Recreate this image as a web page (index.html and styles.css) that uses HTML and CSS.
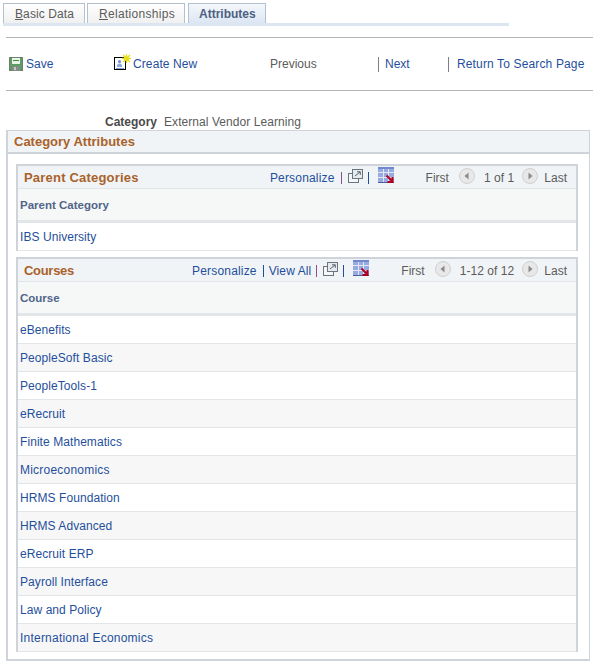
FILE: index.html
```html
<!DOCTYPE html>
<html lang="en">
<head>
    <meta charset="UTF-8">
    <meta name="viewport" content="width=device-width, initial-scale=1.0">
    <title>Category Attributes</title>
    <link rel="stylesheet" href="styles.css">
</head>
<body>
    <div class="tabs">
        <a class="tab tab-basic"><u>B</u>asic Data</a>
        <a class="tab tab-rel"><u>R</u>elationships</a>
        <a class="tab tab-active">Attributes</a>
    </div>

    <div class="toolbar">
        <a class="tool tool-save">
            <svg width="14" height="14" viewBox="0 0 14 14"><rect x="0.5" y="0.5" width="13" height="13" fill="#5c9c62" stroke="#6e8070"/><rect x="3" y="1" width="8" height="6" fill="#eaf4e6"/><rect x="4" y="3" width="6" height="1" fill="#3c8c3c"/><rect x="3" y="9" width="8" height="5" fill="#858b85"/><rect x="5" y="10" width="2" height="3" fill="#c4c8c4"/></svg>
            <span>Save</span>
        </a>
        <a class="tool tool-new">
            <svg width="17" height="17" viewBox="0 0 17 17"><rect x="0.5" y="3.5" width="11" height="12" fill="#fff" stroke="#000"/><circle cx="5.5" cy="7.5" r="1.6" fill="#6f8fd0"/><path d="M3 13v-2l1.500-1.500h2L8 11v2z" fill="#8fa8de"/><rect x="2" y="14" width="8" height="1" fill="#7f9fd8"/><rect x="10" y="2" width="5" height="5" fill="#f2ee50"/><path d="M12.500 0v9M8 4.500h9M9 1l7 7M16 1l-7 7" stroke="#e6de20" stroke-width="1.300"/></svg>
            <span>Create New</span>
        </a>
        <span class="tool tool-prev">Previous</span>
        <a class="tool tool-next">Next</a>
        <a class="tool tool-return">Return To Search Page</a>
    </div>

    <div class="field-row">
        <span class="field-label">Category</span>
        <span class="field-value">External Vendor Learning</span>
    </div>

    <div class="section">
        <h2 class="section-title">Category Attributes</h2>

        <div class="grid grid-parents">
            <div class="grid-head">
                <h3 class="grid-title">Parent Categories</h3>
                <div class="grid-tools">
                    <a class="link-personalize">Personalize</a>
                    <i class="sep sep-first sep-purple"></i>
                    <svg class="icon-zoom" width="15" height="14" viewBox="0 0 15 14"><rect x="0.500" y="4.500" width="10" height="9" fill="#f4f6f8" stroke="#6b7580"/><rect x="4.500" y="0.500" width="10" height="9" fill="#e6eaee" stroke="#6b7580"/><path d="M7 7l5-4M9 2.800h3.300v3" fill="none" stroke="#55616d"/></svg>
                    <i class="sep"></i>
                    <svg class="icon-grid" width="16" height="16" viewBox="0 0 16 16"><rect x="0" y="0" width="16" height="16" fill="#97abe0"/><path d="M0 5.500h16M0 10.500h16M5.500 0v16M10.500 0v16" stroke="#e2e7f4"/><rect x="0" y="0" width="16" height="2" fill="#7189cc"/><rect x="0" y="15" width="16" height="1" fill="#4a5f9c"/><path d="M8.500 8.500l5 5M14.500 10v5h-5" fill="none" stroke="#b00020" stroke-width="2"/></svg>
                </div>
                <div class="pager">
                    <span>First</span>
                    <svg class="arrow arrow-prev" width="16" height="16" viewBox="0 0 16 16"><circle cx="8" cy="8" r="7.500" fill="#e8e8e8" stroke="#cfcfcf"/><path d="M9.500 4.500v7L5.500 8z" fill="#8a8a8a"/></svg>
                    <span class="pager-count">1 of 1</span>
                    <svg class="arrow arrow-next" width="16" height="16" viewBox="0 0 16 16"><circle cx="8" cy="8" r="7.500" fill="#e8e8e8" stroke="#cfcfcf"/><path d="M6.500 4.500v7L10.500 8z" fill="#8a8a8a"/></svg>
                    <span>Last</span>
                </div>
            </div>
            <div class="col-head">Parent Category</div>
            <div class="row"><a>IBS University</a></div>
        </div>

        <div class="grid grid-courses">
            <div class="grid-head">
                <h3 class="grid-title">Courses</h3>
                <div class="grid-tools">
                    <a class="link-personalize">Personalize</a>
                    <i class="sep sep-first"></i>
                    <a class="link-viewall">View All</a>
                    <i class="sep sep-purple"></i>
                    <svg class="icon-zoom" width="15" height="14" viewBox="0 0 15 14"><rect x="0.500" y="4.500" width="10" height="9" fill="#f4f6f8" stroke="#6b7580"/><rect x="4.500" y="0.500" width="10" height="9" fill="#e6eaee" stroke="#6b7580"/><path d="M7 7l5-4M9 2.800h3.300v3" fill="none" stroke="#55616d"/></svg>
                    <i class="sep"></i>
                    <svg class="icon-grid" width="16" height="16" viewBox="0 0 16 16"><rect x="0" y="0" width="16" height="16" fill="#97abe0"/><path d="M0 5.500h16M0 10.500h16M5.500 0v16M10.500 0v16" stroke="#e2e7f4"/><rect x="0" y="0" width="16" height="2" fill="#7189cc"/><rect x="0" y="15" width="16" height="1" fill="#4a5f9c"/><path d="M8.500 8.500l5 5M14.500 10v5h-5" fill="none" stroke="#b00020" stroke-width="2"/></svg>
                </div>
                <div class="pager">
                    <span>First</span>
                    <svg class="arrow arrow-prev" width="16" height="16" viewBox="0 0 16 16"><circle cx="8" cy="8" r="7.500" fill="#e8e8e8" stroke="#cfcfcf"/><path d="M9.500 4.500v7L5.500 8z" fill="#8a8a8a"/></svg>
                    <span class="pager-count">1-12 of 12</span>
                    <svg class="arrow arrow-next" width="16" height="16" viewBox="0 0 16 16"><circle cx="8" cy="8" r="7.500" fill="#e8e8e8" stroke="#cfcfcf"/><path d="M6.500 4.500v7L10.500 8z" fill="#8a8a8a"/></svg>
                    <span>Last</span>
                </div>
            </div>
            <div class="col-head">Course</div>
            <div class="row"><a>eBenefits</a></div>
            <div class="row row-alt"><a>PeopleSoft Basic</a></div>
            <div class="row"><a>PeopleTools-1</a></div>
            <div class="row row-alt"><a>eRecruit</a></div>
            <div class="row"><a>Finite Mathematics</a></div>
            <div class="row row-alt"><a class="wide">Microeconomics</a></div>
            <div class="row"><a>HRMS Foundation</a></div>
            <div class="row row-alt"><a>HRMS Advanced</a></div>
            <div class="row"><a>eRecruit ERP</a></div>
            <div class="row row-alt"><a>Payroll Interface</a></div>
            <div class="row"><a>Law and Policy</a></div>
            <div class="row row-alt"><a class="wide">International Economics</a></div>
        </div>
    </div>
</body>
</html>
```

FILE: styles.css
```css
body {
    margin: 0;
    padding: 0;
    background: #fff;
    font-family: "Liberation Sans", Arial, sans-serif;
    font-size: 12px;
    color: #5b5b5b;
    height: 664px;
    overflow: hidden;
}

a {
    color: #1f4f9c;
    text-decoration: none;
}

/* Tabs */
.tabs {
    display: flex;
    gap: 2px;
    width: 506px;
    height: 20px;
    margin-left: 3px;
    padding-top: 3px;
    border-bottom: 3px solid #dce6f3;
}

.tab {
    height: 20px;
    box-sizing: border-box;
    padding: 3px 0 0 11px;
    border: 1px solid #b4bfcf;
    border-bottom: none;
    background: linear-gradient(#fff, #f0f0f0);
    color: #5b5b5b;
}

.tab-basic {
    width: 82px;
    letter-spacing: 0.1px;
}

.tab-rel {
    width: 98px;
    letter-spacing: 0.3px;
}

.tab-active {
    width: 78px;
    margin-left: 1px;
    padding-left: 10px;
    font-weight: bold;
    color: #4d6082;
    background: linear-gradient(#f4f7fb, #dce6f3);
}

/* Toolbar */
.toolbar {
    display: flex;
    align-items: center;
    height: 52px;
    margin: 11px 0 0 6px;
    border-top: 1px solid #b5b5b5;
    border-bottom: 1px solid #b5b5b5;
}

.tool {
    display: flex;
    align-items: center;
    box-sizing: border-box;
}

.tool-save {
    width: 108px;
    padding-left: 3px;
    gap: 3px;
}

.tool-new {
    width: 156px;
    gap: 2px;
    margin-top: -3px;
    letter-spacing: 0.1px;
}

.tool-new span {
    margin-top: 3px;
}

.tool-prev {
    width: 108px;
}

.tool-next,
.tool-return {
    height: 15px;
    border-left: 1px solid #7f7f7f;
}

.tool-next {
    width: 70px;
    padding-left: 6px;
}

.tool-return {
    padding-left: 8px;
    letter-spacing: 0.14px;
}

/* Category field */
.field-row {
    display: flex;
    gap: 7px;
    margin: 24px 0 0 105px;
    line-height: 14px;
}

.field-label {
    font-weight: bold;
    color: #4a4a4a;
}

.field-value {
    letter-spacing: 0.06px;
}

/* Section box */
.section {
    width: 584px;
    height: 531px;
    margin: 1px 0 0 6px;
    box-sizing: border-box;
    border: 2px solid #ced4da;
    border-top-width: 1px;
    border-right-width: 1px;
}

.section-title {
    margin: 0;
    height: 18px;
    padding: 3px 0 0 6px;
    background: #f1f4f6;
    border-bottom: 2px solid #ced4da;
    font-size: 13px;
    line-height: 15px;
    color: #a9622a;
}

/* Grids */
.grid {
    width: 562px;
    margin: 0 0 0 8px;
    box-sizing: border-box;
    border-top: 2px solid #ced4da;
    border-left: 2px solid #ced4da;
    border-right: 2px solid #ced4da;
}

.grid-parents {
    margin-top: 10px;
}

.grid-courses {
    margin-top: 6px;
}

.grid-head {
    display: flex;
    align-items: center;
    height: 22px;
    background: #f1f4f6;
    border-bottom: 1px solid #e3e6e8;
}

.grid-title {
    margin: 0 0 0 6px;
    font-size: 13px;
    color: #a9622a;
}

.grid-parents .grid-title {
    letter-spacing: 0.2px;
}

.grid-courses .grid-title {
    letter-spacing: -0.3px;
}

.grid-tools {
    display: flex;
    align-items: center;
    gap: 5px;
    margin-left: auto;
}

.grid-tools a,
.pager span {
    padding-top: 2px;
}

.link-personalize {
    letter-spacing: 0.18px;
}

.link-viewall {
    letter-spacing: 0.1px;
}

.sep {
    width: 1px;
    height: 12px;
    margin-top: 2px;
    background: #1f4f9c;
}

.sep-first {
    margin-left: 1px;
}

.sep-purple {
    background: #8a4f8f;
}

.icon-zoom {
    margin: -2px 0 0 1px;
}

.icon-grid {
    margin: -4px 0 0 4px;
}

.pager {
    display: flex;
    align-items: center;
    margin: 0 9px 0 32px;
}

.pager-count {
    letter-spacing: 0.06px;
}

.arrow-prev {
    margin: -3px 9px 0 10px;
}

.arrow-next {
    margin: -3px 6px 0 8px;
}

.col-head {
    height: 31px;
    padding-left: 2px;
    background: #f6f7f7;
    border-bottom: 3px solid #e3e6e8;
    font-size: 11.500px;
    font-weight: bold;
    line-height: 32px;
    color: #51658a;
}

.row {
    height: 27px;
    padding-left: 2px;
    border-bottom: 1px solid #e3e6e8;
    line-height: 29px;
    background: #fff;
    letter-spacing: 0.07px;
}

.row-alt {
    background: #f7f7f7;
}

.row .wide {
    letter-spacing: 0.22px;
}
```
